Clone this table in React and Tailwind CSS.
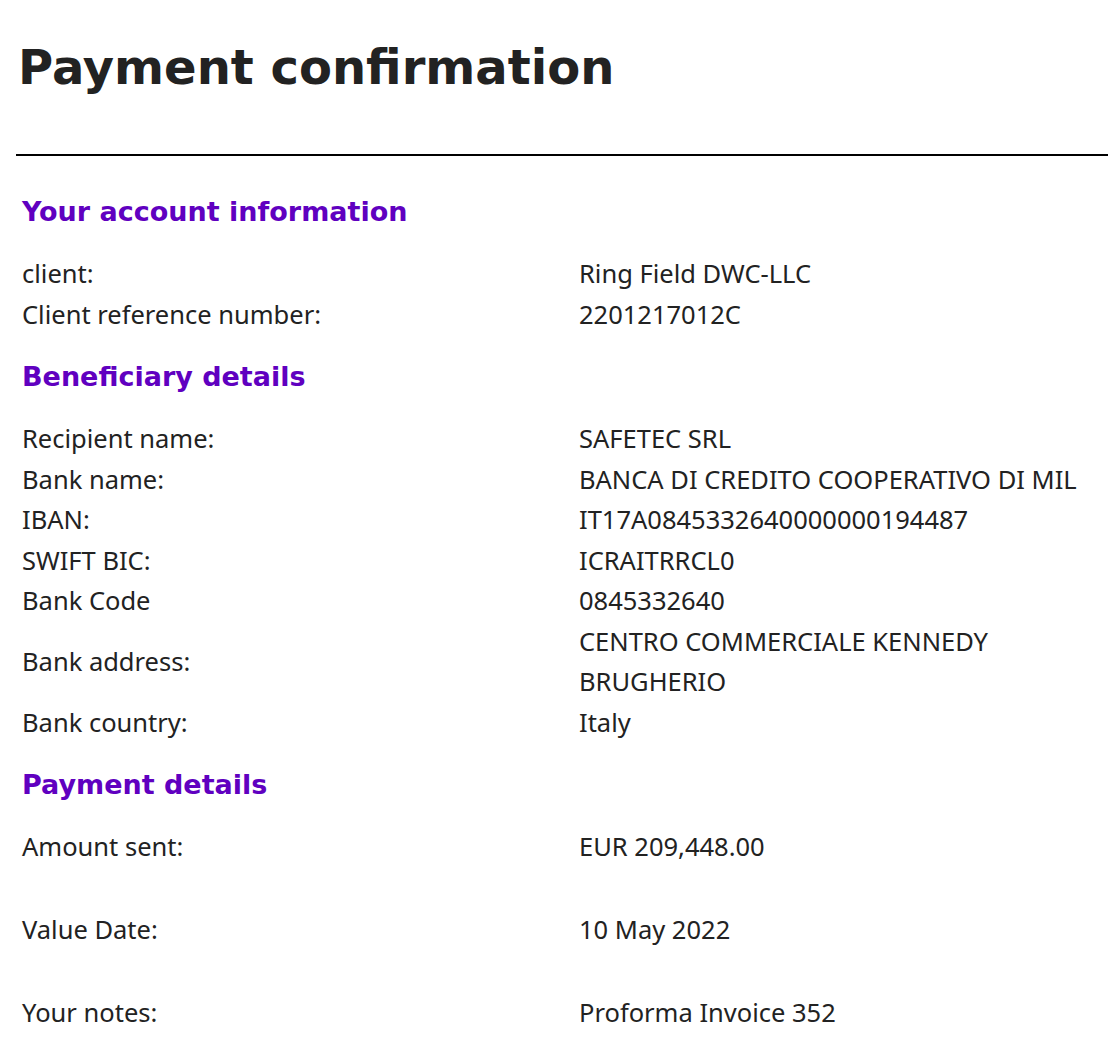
const account = [
  ['client:', 'Ring Field DWC-LLC'],
  ['Client reference number:', '2201217012C'],
]

const beneficiary = [
  ['Recipient name:', 'SAFETEC SRL'],
  ['Bank name:', 'BANCA DI CREDITO COOPERATIVO DI MIL'],
  ['IBAN:', 'IT17A0845332640000000194487'],
  ['SWIFT BIC:', 'ICRAITRRCL0'],
  ['Bank Code', '0845332640'],
  ['Bank address:', ['CENTRO COMMERCIALE KENNEDY', 'BRUGHERIO']],
  ['Bank country:', 'Italy'],
]

const payment = [
  ['Amount sent:', 'EUR 209,448.00'],
  ['Value Date:', '10 May 2022'],
  ['Your notes:', 'Proforma Invoice 352'],
]

function Section({ title, rows, tall }) {
  // payment rows are spaced with an empty line under each entry
  const lh = tall ? 'leading-[41px] pb-[42px]' : 'leading-[40.5px]'
  return (
    <div className="pl-[6px]">
      <h2 className="text-[27px] leading-[41px] font-bold text-[#6000c0] font-['DejaVu_Sans',sans-serif] mb-[21px]">{title}</h2>
      <div className="grid grid-cols-[557px_1fr] text-[25.5px] font-['Noto_Sans',sans-serif]">
        {rows.map(([label, value]) => (
          <div key={label} className="contents">
            <div className={`flex ${tall ? 'items-start' : 'items-center'} ${lh}`}>{label}</div>
            <div className={lh}>
              {Array.isArray(value) ? value.map((v) => <div key={v}>{v}</div>) : value}
            </div>
          </div>
        ))}
      </div>
    </div>
  )
}

export default function App() {
  return (
    <div className="min-h-screen bg-white pl-4 pt-[43px] text-[#222222] font-['DejaVu_Sans',sans-serif]">
      <h1 className="ml-[2px] text-[48px] leading-none font-bold">Payment confirmation</h1>
      <div className="mt-[63px] h-[2px] bg-black" />
      <div className="mt-[35px] flex flex-col gap-[22px]">
        <Section title="Your account information" rows={account} />
        <Section title="Beneficiary details" rows={beneficiary} />
        <Section title="Payment details" rows={payment} tall />
      </div>
    </div>
  )
}
